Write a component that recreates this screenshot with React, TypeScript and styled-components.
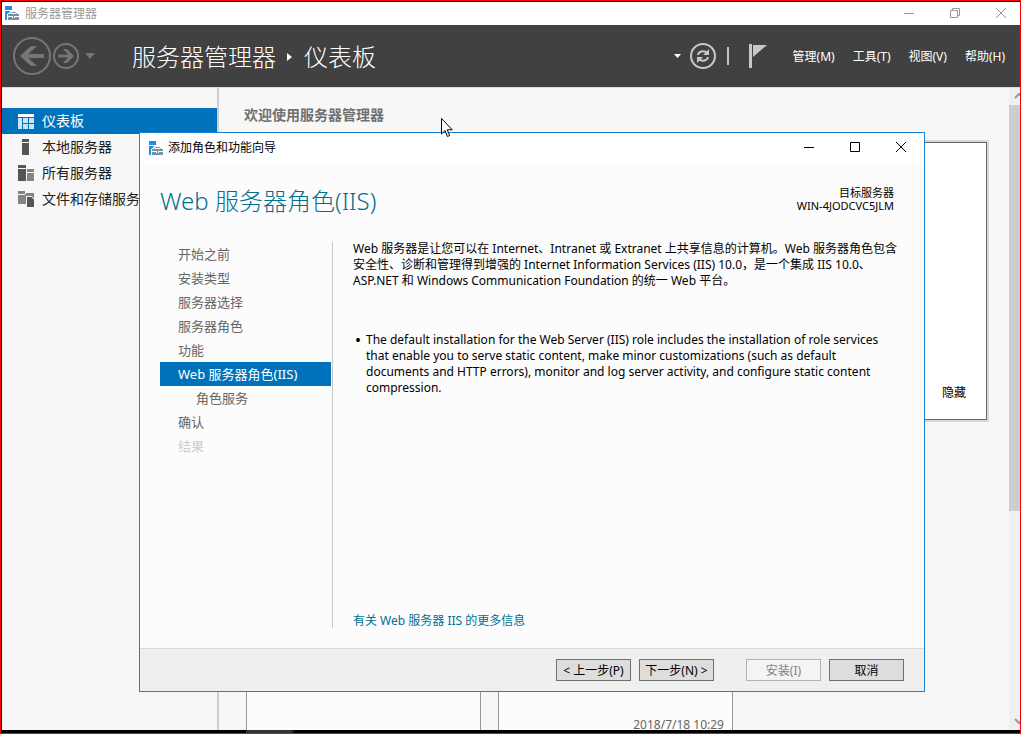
import React from "react";
import styled, { createGlobalStyle } from "styled-components";

const FONT = `"Noto Sans", "Noto Sans CJK SC", sans-serif`;

const GlobalStyle = createGlobalStyle`
  *, *::before, *::after { box-sizing: border-box; }
  body { margin: 0; background: #000; font: 12px/16px ${FONT}; color: #000; }
  button { font: inherit; color: inherit; margin: 0; padding: 0; border: 0; background: none; }
  h1, h2, p, ul, ol { margin: 0; padding: 0; font-weight: 400; list-style: none; }
  a { color: inherit; text-decoration: none; }
  svg { display: block; flex: none; }
`;

const Screen = styled.div`
  position: relative;
  display: flex;
  flex-direction: column;
  height: 100vh;
  min-height: 720px;
  border: 1px solid #f00;
  padding: 1px 0 0 1px;
  background: #000;
  overflow: hidden;
`;

const TitleBar = styled.div<{ $active?: boolean }>`
  display: flex;
  align-items: center;
  gap: ${(p) => (p.$active ? 4 : 5)}px;
  height: ${(p) => (p.$active ? 30 : 23)}px;
  padding-left: ${(p) => (p.$active ? 9 : 3)}px;
  background: #fff;
  color: ${(p) => (p.$active ? "#000" : "#999")};
  flex: none;
`;

const WindowButtons = styled.div<{ $clipped?: boolean }>`
  display: flex;
  margin-left: auto;
  margin-right: ${(p) => (p.$clipped ? -4 : 0)}px;
  padding-bottom: 2px;
`;

const WindowButton = styled.button`
  display: grid;
  place-items: center;
  width: 46px;
  height: 20px;
`;

const Header = styled.header`
  display: flex;
  align-items: center;
  height: 62px;
  padding: 0 15px 0 11px;
  background: #414141;
  color: #fff;
  flex: none;
`;

const IconButton = styled.button`
  display: block;
`;

const History = styled.div`
  display: flex;
  align-items: center;
  gap: 2px;
`;

const HistoryMenu = styled(IconButton)`
  margin-left: 4px;
`;

const Breadcrumb = styled.h1`
  display: flex;
  align-items: center;
  gap: 11px;
  margin-left: 37px;
  padding-top: 2px;
  font-size: 24px;
  line-height: 32px;
  font-weight: 300;
`;

const Tools = styled.div`
  display: flex;
  align-items: center;
  gap: 9px;
  margin-left: auto;
`;

const Divider = styled.span`
  width: 2px;
  height: 18px;
  margin: 0 11px 0 2px;
  background: #c4c4c4;
`;

const Menu = styled.nav`
  display: flex;
  gap: 18px;
  margin-left: 17px;
  padding-top: 2px;
`;

const Body = styled.div`
  display: flex;
  flex: 1;
  min-height: 0;
  border-top: 1px solid #dcdcdc;
  background: #f7f7f7;
`;

const Sidebar = styled.nav`
  width: 217px;
  padding-top: 20px;
  border-right: 2px solid #cfcfcf;
  flex: none;
`;

const SideItem = styled.a<{ $selected?: boolean }>`
  display: flex;
  align-items: center;
  gap: 8px;
  height: 26px;
  padding-left: 16px;
  font-size: 14px;
  line-height: 20px;
  white-space: nowrap;
  background: ${(p) => (p.$selected ? "#0072bc" : "transparent")};
  color: ${(p) => (p.$selected ? "#fff" : "#222")};
`;

const Main = styled.main`
  flex: 1;
  min-width: 0;
  padding: 17px 22px 0 27px;
  overflow: hidden;
`;

const Welcome = styled.h2`
  font-size: 14px;
  line-height: 20px;
  font-weight: 700;
  color: #707070;
  margin-left: -2px;
`;

const WelcomePanel = styled.section`
  display: flex;
  align-items: flex-end;
  justify-content: flex-end;
  height: 278px;
  margin-top: 17px;
  padding: 18px 20px;
  border: 1px solid #666;
  background: #fff;
  box-shadow: 0 0 0 2px #d9d9d9;
`;

const Tiles = styled.div`
  display: flex;
  gap: 17px;
  margin-top: 40px;
`;

const Tile = styled.section`
  display: flex;
  align-items: flex-end;
  justify-content: flex-end;
  width: 235px;
  height: 276px;
  padding: 2px 8px;
  border: 1px solid #999;
  background: #fcfcfc;
  color: #666;
`;

const ScrollBar = styled.div`
  display: flex;
  flex-direction: column;
  width: 11px;
  background: #f0f0f0;
  overflow: hidden;
  flex: none;
`;

const ScrollThumb = styled.div`
  height: 406px;
  background: #cdcdcd;
  margin-bottom: auto;
`;

const TaskBar = styled.div`
  height: 3px;
  padding-left: 244px;
  background: #000;
  flex: none;
`;

const TaskButton = styled.div`
  width: 48px;
  height: 3px;
  background: #333;
  border-right: 3px solid #222;
`;

const Dialog = styled.div`
  position: absolute;
  top: 131px;
  left: 138px;
  right: 95px;
  display: flex;
  flex-direction: column;
  min-height: 560px;
  border: 1px solid #1883d7;
  background: #fcfcfc;
`;

const DialogHead = styled.div`
  display: flex;
  justify-content: space-between;
  padding: 22px 30px 0 20px;
`;

const DialogTitle = styled.h2`
  font-size: 24px;
  line-height: 32px;
  font-weight: 300;
  color: #00708f;
`;

const Target = styled.p`
  padding-top: 1px;
  font-size: 11px;
  line-height: 13px;
  text-align: right;
`;

const DialogBody = styled.div`
  display: flex;
  flex: 1;
  padding: 24px 22px 19px 20px;
`;

const Steps = styled.ol`
  width: 173px;
  margin: 1px 0;
  border-right: 1px solid #c8c8c8;
  padding-right: 1px;
  flex: none;
`;

const Step = styled.li<{ $state?: "current" | "disabled"; $nested?: boolean }>`
  height: 24px;
  padding-left: ${(p) => (p.$nested ? 36 : 18)}px;
  font-size: 13px;
  line-height: 24px;
  background: ${(p) => (p.$state === "current" ? "#0072bc" : "transparent")};
  color: ${(p) =>
    p.$state === "current" ? "#fff" : p.$state === "disabled" ? "#ccc" : "#666"};
`;

const Article = styled.div`
  display: flex;
  flex-direction: column;
  flex: 1;
  min-width: 0;
  padding-left: 20px;
`;

const Notes = styled.ul`
  margin-top: 43px;
`;

const Note = styled.li`
  display: flex;
  gap: 6px;
  padding: 0 8px 0 2px;
`;

const Bullet = styled.span`
  width: 5px;
  font-size: 16px;
`;

const MoreLink = styled.a`
  margin-top: auto;
  color: #00708f;
`;

const DialogFooter = styled.div`
  display: flex;
  justify-content: flex-end;
  gap: 8px;
  padding: 10px 20px;
  border-top: 1px solid #d9d9d9;
  background: #efefef;
`;

const PushButton = styled.button<{ $apart?: boolean }>`
  width: 75px;
  height: 22px;
  padding-top: 1px;
  line-height: 20px;
  margin-left: ${(p) => (p.$apart ? 24 : 0)}px;
  border: 1px solid #707070;
  background: #ddd;
  &:disabled {
    border-color: #adb2b5;
    background: #f4f4f4;
    color: #838383;
  }
`;

const Pointer = styled.svg`
  position: absolute;
  top: 117px;
  left: 440px;
`;

const AppIcon = () => (
  <svg width="15" height="15" viewBox="0 0 15 15" aria-hidden="true">
    <path fill="#1f8fe0" d="M0 0h7v4H0zM0 5h5v1L2 8v6H0z" />
    <path fill="#7393a7" d="M3 8h11v6H3z" />
    <path fill="none" stroke="#7393a7" d="M5.500 8.500v-1l1-1h4l1 1v1" />
    <path stroke="#fff" d="M3 10.500h4M10 10.500h4M7.500 10v2M9.500 10v2" />
  </svg>
);

const Minimize = ({ c }: { c: string }) => (
  <svg width="10" height="10" aria-hidden="true"><path stroke={c} d="M0 5.500h10" /></svg>
);
const Maximize = ({ c }: { c: string }) => (
  <svg width="10" height="10" aria-hidden="true"><path fill="none" stroke={c} d="M.5.5h9v9h-9z" /></svg>
);
const Restore = ({ c }: { c: string }) => (
  <svg width="10" height="10" aria-hidden="true"><path fill="none" stroke={c} d="M.5 2.500h7v7h-7zM2.500 2V.5h7v7H8" /></svg>
);
const Close = ({ c }: { c: string }) => (
  <svg width="10" height="10" aria-hidden="true"><path stroke={c} d="M0 0l10 10M10 0L0 10" /></svg>
);

const BackIcon = () => (
  <svg width="38" height="38" viewBox="0 0 38 38" aria-hidden="true">
    <circle cx="19" cy="19" r="18" fill="none" stroke="#757575" strokeWidth="2" />
    <path fill="#757575" d="M7 19l11-10h6l-8.500 8H31v4H15.500l8.500 8h-6z" />
  </svg>
);
const ForwardIcon = () => (
  <svg width="26" height="26" viewBox="0 0 26 26" aria-hidden="true">
    <circle cx="13" cy="13" r="12" fill="none" stroke="#757575" strokeWidth="2" />
    <path fill="#757575" d="M21 13l-7-7h-4l5 5.500H5v3h10L10 20h4z" />
  </svg>
);
const Caret = ({ w, h, c }: { w: number; h: number; c: string }) => (
  <svg width={w} height={h} viewBox="0 0 10 6" preserveAspectRatio="none" aria-hidden="true">
    <path fill={c} d="M0 0h10L5 6z" />
  </svg>
);
const RefreshIcon = () => (
  <svg width="26" height="26" viewBox="0 0 26 26" fill="none" aria-hidden="true">
    <circle cx="13" cy="13" r="12" stroke="#c8c8c8" strokeWidth="2" />
    <g stroke="#c8c8c8" strokeWidth="2">
      <path d="M8 12a5 4 0 0 1 9-2M18 14a5 4 0 0 1-9 2" />
    </g>
    <path fill="#c8c8c8" d="M19 6v6h-6zM7 20v-6h6z" />
  </svg>
);
const FlagIcon = () => (
  <svg width="18" height="24" viewBox="0 0 18 24" aria-hidden="true">
    <path fill="#c8c8c8" d="M0 0h3v24H0zM4 1h14L4 13z" />
  </svg>
);

const DashboardIcon = () => (
  <svg width="16" height="16" aria-hidden="true">
    <path fill="#fff" d="M0 1h16v3H0z" />
    <path fill="#cce3f2" d="M0 5h4v11H0zM5 5h5v5H5zM11 5h5v5h-5zM5 11h5v5H5zM11 11h5v5h-5z" />
  </svg>
);
const ServerIcon = () => (
  <svg width="16" height="16" aria-hidden="true"><path fill="#555" d="M4 0h7v3H4zM4 4h7v12H4z" /></svg>
);
const ServersIcon = () => (
  <svg width="16" height="16" aria-hidden="true">
    <path fill="#555" d="M0 0h8v3H0zM0 4h8v12H0z" />
    <path fill="#848484" d="M9 4h7v3H9zM9 8h7v8H9z" />
  </svg>
);
const StorageIcon = () => (
  <svg width="16" height="16" aria-hidden="true">
    <path fill="#848484" d="M0 0h7v3H0zM0 4h7V3h1V2h8v10H9v1H0z" />
    <path fill="#555" d="M9 6h4l3 3v7H9z" />
    <path fill="none" stroke="#f7f7f7" d="M8.500 13V5.500h5l2.500 2.500" />
  </svg>
);
const ScrollArrow = ({ up }: { up?: boolean }) => (
  <svg width="17" height="17" aria-hidden="true">
    <path fill="none" stroke="#999" strokeWidth="2" d={up ? "M6 10l4-4 4 4" : "M6 6l4 4 4-4"} />
  </svg>
);

const sideItems = [
  { label: "仪表板", icon: <DashboardIcon />, selected: true },
  { label: "本地服务器", icon: <ServerIcon /> },
  { label: "所有服务器", icon: <ServersIcon /> },
  { label: "文件和存储服务", icon: <StorageIcon /> },
];

const steps: { label: string; state?: "current" | "disabled"; nested?: boolean }[] = [
  { label: "开始之前" },
  { label: "安装类型" },
  { label: "服务器选择" },
  { label: "服务器角色" },
  { label: "功能" },
  { label: "Web 服务器角色(IIS)", state: "current" },
  { label: "角色服务", nested: true },
  { label: "确认" },
  { label: "结果", state: "disabled" },
];

export default function App() {
  return (
    <>
      <GlobalStyle />
      <Screen>
        <TitleBar>
          <AppIcon />
          <span>服务器管理器</span>
          <WindowButtons $clipped>
            <WindowButton aria-label="最小化"><Minimize c="#999" /></WindowButton>
            <WindowButton aria-label="还原"><Restore c="#999" /></WindowButton>
            <WindowButton aria-label="关闭"><Close c="#999" /></WindowButton>
          </WindowButtons>
        </TitleBar>
        <Header>
          <History>
            <IconButton aria-label="后退"><BackIcon /></IconButton>
            <IconButton aria-label="前进"><ForwardIcon /></IconButton>
            <HistoryMenu aria-label="历史记录"><Caret w={10} h={6} c="#757575" /></HistoryMenu>
          </History>
          <Breadcrumb>
            <span>服务器管理器</span>
            <svg width="6" height="8" aria-hidden="true"><path fill="#fff" d="M0 0l5 4-5 4z" /></svg>
            <span>仪表板</span>
          </Breadcrumb>
          <Tools>
            <IconButton aria-label="通知选项"><Caret w={7} h={4} c="#fff" /></IconButton>
            <IconButton aria-label="刷新"><RefreshIcon /></IconButton>
            <Divider />
            <IconButton aria-label="通知"><FlagIcon /></IconButton>
            <Menu>
              <button>管理(M)</button>
              <button>工具(T)</button>
              <button>视图(V)</button>
              <button>帮助(H)</button>
            </Menu>
          </Tools>
        </Header>
        <Body>
          <Sidebar>
            {sideItems.map((item) => (
              <SideItem key={item.label} href="#" $selected={item.selected}>
                {item.icon}
                {item.label}
              </SideItem>
            ))}
          </Sidebar>
          <Main>
            <Welcome>欢迎使用服务器管理器</Welcome>
            <WelcomePanel><button>隐藏</button></WelcomePanel>
            <Tiles>
              <Tile />
              <Tile>2018/7/18 10:29</Tile>
            </Tiles>
          </Main>
          <ScrollBar>
            <ScrollArrow up />
            <ScrollThumb />
            <ScrollArrow />
          </ScrollBar>
        </Body>
        <TaskBar><TaskButton /></TaskBar>

        <Dialog role="dialog" aria-labelledby="wizard-title">
          <TitleBar $active>
            <AppIcon />
            <span>添加角色和功能向导</span>
            <WindowButtons>
              <WindowButton aria-label="最小化"><Minimize c="#000" /></WindowButton>
              <WindowButton aria-label="最大化"><Maximize c="#000" /></WindowButton>
              <WindowButton aria-label="关闭"><Close c="#000" /></WindowButton>
            </WindowButtons>
          </TitleBar>
          <DialogHead>
            <DialogTitle id="wizard-title">Web 服务器角色(IIS)</DialogTitle>
            <Target>目标服务器<br />WIN-4JODCVC5JLM</Target>
          </DialogHead>
          <DialogBody>
            <Steps>
              {steps.map((s) => (
                <Step key={s.label} $state={s.state} $nested={s.nested}>{s.label}</Step>
              ))}
            </Steps>
            <Article>
              <p>
                Web 服务器是让您可以在 Internet、Intranet 或 Extranet 上共享信息的计算机。Web 服务器角色包含安全性、诊断和管理得到增强的 Internet Information Services (IIS) 10.0，是一个集成 IIS 10.0、ASP.NET 和 Windows Communication Foundation 的统一 Web 平台。
              </p>
              <Notes>
                <Note>
                  <Bullet>•</Bullet>
                  <p>
                    The default installation for the Web Server (IIS) role includes the installation of role services that enable you to serve static content, make minor customizations (such as default documents and HTTP errors), monitor and log server activity, and configure static content compression.
                  </p>
                </Note>
              </Notes>
              <MoreLink href="#">有关 Web 服务器 IIS 的更多信息</MoreLink>
            </Article>
          </DialogBody>
          <DialogFooter>
            <PushButton>&lt; 上一步(P)</PushButton>
            <PushButton>下一步(N) &gt;</PushButton>
            <PushButton $apart disabled>安装(I)</PushButton>
            <PushButton>取消</PushButton>
          </DialogFooter>
        </Dialog>

        <Pointer width="12" height="19" viewBox="0 0 12 19" aria-hidden="true">
          <path fill="#fff" stroke="#000" d="M.5.500v15.500l3.500-3.400 2.500 5.900 2.200-1-2.500-5.700h5z" />
        </Pointer>
      </Screen>
    </>
  );
}
